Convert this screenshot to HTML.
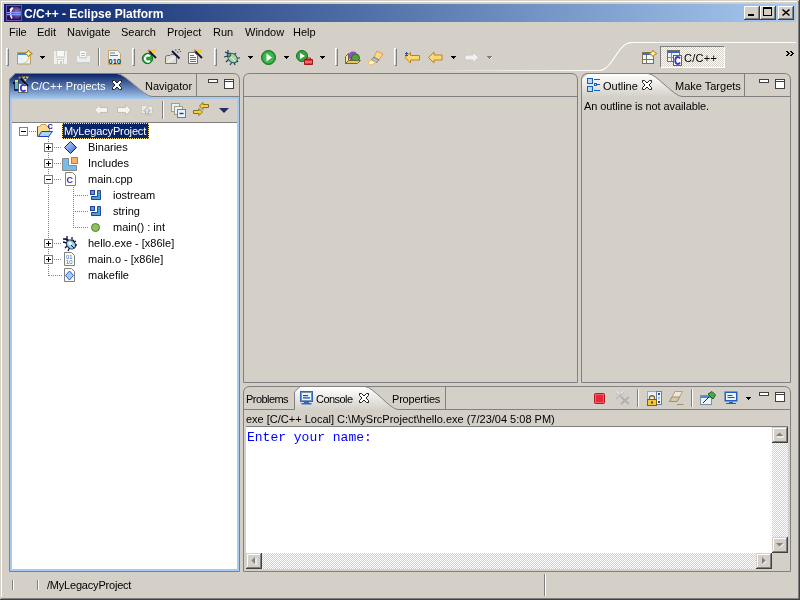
<!DOCTYPE html>
<html><head><meta charset="utf-8">
<style>
*{margin:0;padding:0;box-sizing:border-box}
html,body{width:800px;height:600px;overflow:hidden;background:#d4d0c8;font:11px "Liberation Sans",sans-serif;color:#000}
.a{position:absolute}
.t{position:absolute;white-space:nowrap;line-height:13px;font-size:11px;will-change:transform}
.h{position:absolute;background:#808080}
.w{position:absolute;background:#fff}
.dith{background:repeating-conic-gradient(#fff 0 25%,#d4d0c8 0 50%) 0 0/2px 2px}
svg{position:absolute;overflow:visible}
.btn{position:absolute;width:16px;height:14px;background:#d4d0c8;box-shadow:inset -1px -1px #404040,inset 1px 1px #fff,inset -2px -2px #808080,inset 2px 2px #d4d0c8}
.hdl{position:absolute;width:3px;height:18px;border-left:1px solid #fff;border-top:1px solid #fff;border-right:1px solid #808080;border-bottom:1px solid #808080}
.sep{position:absolute;width:2px;height:18px;border-left:1px solid #808080;border-right:1px solid #fff}
.mn{position:absolute;width:10px;height:4px;border:1px solid #404040;background:#fff}
.mx{position:absolute;width:10px;height:10px;border:1px solid #404040;background:#fff}
.mx::after{content:"";position:absolute;left:0;top:1px;width:8px;height:1px;background:#404040}
.tb{position:absolute;width:9px;height:9px;border:1px solid #808080;background:#fff}
.sb{position:absolute;width:16px;height:16px;background:#d4d0c8;box-shadow:inset -1px -1px #404040,inset 1px 1px #d4d0c8,inset -2px -2px #808080,inset 2px 2px #fff}
.dd{position:absolute;width:5px;height:3px;--c:#000;background:linear-gradient(var(--c),var(--c)) 0 0/5px 1px no-repeat,linear-gradient(var(--c),var(--c)) 1px 1px/3px 1px no-repeat,linear-gradient(var(--c),var(--c)) 2px 2px/1px 1px no-repeat}
</style></head><body>
<!-- window frame -->
<div class="w" style="left:1px;top:1px;width:796px;height:1px"></div>
<div class="w" style="left:1px;top:1px;width:1px;height:596px"></div>
<div class="h" style="left:1px;top:598px;width:798px;height:1px"></div>
<div class="h" style="left:798px;top:1px;width:1px;height:598px"></div>
<div class="a" style="left:0;top:599px;width:800px;height:1px;background:#404040"></div>
<div class="a" style="left:799px;top:0;width:1px;height:600px;background:#404040"></div>

<!-- title bar -->
<div class="a" style="left:4px;top:4px;width:792px;height:18px;background:linear-gradient(to right,#0a246a,#a6caf0)"></div>
<div class="t" style="left:24px;top:8px;color:#fff;font-weight:bold;font-size:12px">C/C++ - Eclipse Platform</div>


<!-- title icon -->
<svg style="left:6px;top:5px" width="16" height="16">
<defs><radialGradient id="eg" cx="0.62" cy="0.45" r="0.55"><stop offset="0" stop-color="#9078c8"/><stop offset="0.7" stop-color="#5a3c90"/><stop offset="1" stop-color="#2a1858"/></radialGradient></defs>
<rect x="0.5" y="0.5" width="15" height="15" fill="#22164e" stroke="#7050b0"/>
<circle cx="9.5" cy="8" r="6.5" fill="url(#eg)"/>
<path d="M7 2.5 Q2.5 7 6 13.5" stroke="#f0e0ff" stroke-width="1.6" fill="none"/>
<path d="M6.5 3 L4 5" stroke="#fff" stroke-width="2"/>
<rect x="1" y="7" width="14" height="1.2" fill="#8898f8"/><rect x="1" y="9" width="14" height="1.2" fill="#8898f8"/>
</svg>
<!-- title buttons -->
<div class="btn" style="left:744px;top:6px"><div class="a" style="left:4px;top:8px;width:6px;height:2px;background:#000"></div></div>
<div class="btn" style="left:760px;top:6px"><div class="a" style="left:3px;top:1px;width:9px;height:9px;border:1px solid #000;border-top-width:2px"></div></div>
<div class="btn" style="left:778px;top:6px"><svg style="left:0;top:0" width="16" height="14"><path d="M4.5 3.5 L11.5 9.5 M11.5 3.5 L4.5 9.5" stroke="#000" stroke-width="1.6"/></svg></div>

<!-- menu -->
<div class="t" style="left:9px;top:26px">File</div>
<div class="t" style="left:37px;top:26px">Edit</div>
<div class="t" style="left:67px;top:26px">Navigate</div>
<div class="t" style="left:121px;top:26px">Search</div>
<div class="t" style="left:167px;top:26px">Project</div>
<div class="t" style="left:213px;top:26px">Run</div>
<div class="t" style="left:245px;top:26px">Window</div>
<div class="t" style="left:293px;top:26px">Help</div>


<!-- toolbar -->
<div class="hdl" style="left:6px;top:48px"></div>
<svg style="left:17px;top:50px" width="16" height="15">
<rect x="0.5" y="2.5" width="13" height="11.5" fill="#e8f4fc" stroke="#b8a060"/>
<rect x="1" y="3" width="12" height="2" fill="#4a8ad0"/>
<path d="M12 5 Q12 12 6 13.5" stroke="#f0c040" fill="none"/>
<path d="M11.5 0.2 L12.8 2.2 L15.3 3.5 L12.8 4.8 L11.5 6.8 L10.2 4.8 L7.7 3.5 L10.2 2.2z" fill="#fff4a0" stroke="#a07820"/>
</svg>
<div class="dd" style="left:40px;top:56px"></div>
<svg style="left:53px;top:50px" width="15" height="15">
<rect x="0.5" y="0.5" width="14" height="14" fill="#f0f0ee" stroke="#cfcfcc"/>
<rect x="3.5" y="0.5" width="8" height="7" fill="#f8f8f6" stroke="#cfcfcc"/>
<rect x="3" y="6" width="9" height="1.5" fill="#e0ded8"/>
<rect x="4.5" y="9.5" width="6" height="5" fill="#f6f6f4" stroke="#cfcfcc"/>
<rect x="7" y="11" width="2" height="3" fill="#c8c8c4"/>
</svg>
<svg style="left:76px;top:50px" width="15" height="15">
<path d="M3.5 0.5 H8.5 L10.5 2.5 V7.5 H3.5z" fill="#f8f8f6" stroke="#cfcfcc"/>
<path d="M5 3.5 H9 M5 5.5 H9" stroke="#c0c0c0"/>
<path d="M0.5 5.5 H3.5 V8 H10.5 V5.5 H14.5 V12.5 H0.5z" fill="#eeeeec" stroke="#cfcfcc"/>
<rect x="1" y="12" width="13" height="2.5" fill="#c8ccd4"/>
</svg>
<div class="sep" style="left:98px;top:48px"></div>
<svg style="left:108px;top:50px" width="14" height="15">
<path d="M0.5 0.5 h9 l3 3 v11 h-12z" fill="#eef4fc" stroke="#c0a868"/>
<path d="M2 3 h5 M2 5.5 h8" stroke="#5080c0" stroke-width="1.2"/>
<text x="0.5" y="13.5" font-family="Liberation Sans" font-weight="bold" font-size="7.5" fill="#102a68">010</text>
</svg>
<div class="hdl" style="left:132px;top:48px"></div>
<svg style="left:142px;top:49px" width="16" height="16">
<circle cx="5.5" cy="9.5" r="5.2" fill="#28a038" stroke="#186828"/>
<path d="M8 7.3 A3 3 0 1 0 8 11.7" stroke="#fff" stroke-width="2" fill="none"/>
<path d="M6.5 1.5 L14 9" stroke="#101030" stroke-width="1.8"/><path d="M6 1 L7.5 2.5" stroke="#e08050" stroke-width="1.8"/><path d="M9 0.5 l1 1.5 l1 -1.5 M12 0.5 l1 1.5 l1 -1.5 M10.5 3 l1 1.5 l1 -1.5" stroke="#f0c820" stroke-width="1.1" fill="none"/>
</svg>
<svg style="left:165px;top:49px" width="17" height="16">
<path d="M0.5 14.5 V8.5 Q0.5 6.5 2.5 6.5 H5 L6 5.5 H9 L10 6.5 H11.5 V14.5z" fill="#dcdcdc" stroke="#707070"/>
<path d="M1 14 L9 7.5 M3 14 L10 8.5" stroke="#f8f8d0"/>
<path d="M7 2 L14.5 9.5" stroke="#101030" stroke-width="1.8"/>
<path d="M10 1 h1.5 M13.5 0.5 h1.5 M12 3 h1.5 M15 2.5 h1" stroke="#404880" stroke-width="1.2"/>
</svg>
<svg style="left:188px;top:49px" width="16" height="16">
<path d="M0.5 3.5 H6.5 L9.5 6.5 V14.5 H0.5z" fill="#fafafa" stroke="#707070"/>
<path d="M2 6.5 h4 M2 8.5 h6 M2 10.5 h6 M2 12.5 h6" stroke="#209090" stroke-width="1.1"/>
<path d="M6.5 1.5 L14 9" stroke="#101030" stroke-width="1.8"/><path d="M6 1 L7.5 2.5" stroke="#e08050" stroke-width="1.8"/><path d="M9 0.5 l1 1.5 l1 -1.5 M12 0.5 l1 1.5 l1 -1.5 M10.5 3 l1 1.5 l1 -1.5" stroke="#f0c820" stroke-width="1.1" fill="none"/>
</svg>
<div class="hdl" style="left:214px;top:48px"></div>
<svg style="left:224px;top:50px" width="17" height="16">
<path d="M1 2 L5 4 M4 0 V4 M0 7 L4 6 M2 12 L5 9 M6 15 L8 12 M12 3 L10 5 M16 8 L13 8 M14 12 L12 10 M11 15 L10 12" stroke="#1a3a50" stroke-width="1.2"/>
<ellipse cx="8.5" cy="8" rx="5.5" ry="4" fill="#a8d898" stroke="#2a5a70" transform="rotate(45 8.5 8)"/>
<path d="M6 6 L11 11" stroke="#e8f8e0" stroke-width="1"/>
<circle cx="5" cy="5" r="1.8" fill="#5a9a80" stroke="#1a3a50" stroke-width="0.8"/>
</svg>
<div class="dd" style="left:248px;top:56px"></div>
<svg style="left:261px;top:50px" width="15" height="15">
<circle cx="7.5" cy="7.5" r="7" fill="#28a038" stroke="#187020"/>
<circle cx="7.5" cy="7.5" r="5.5" fill="#40b850"/>
<path d="M5.5 3.5 L11 7.5 L5.5 11.5z" fill="#fff"/>
</svg>
<div class="dd" style="left:284px;top:56px"></div>
<svg style="left:296px;top:50px" width="17" height="15">
<circle cx="6" cy="6" r="5.5" fill="#30a840" stroke="#187020"/>
<path d="M4 3 L9 6 L4 9z" fill="#fff"/>
<path d="M8.5 9.5 h8 v5 h-8z" fill="#e03838" stroke="#a01818"/>
<path d="M10.5 9.5 v-1.5 h4 v1.5" stroke="#a01818" fill="none"/><path d="M9 12 h7" stroke="#ffa0a0"/>
</svg>
<div class="dd" style="left:320px;top:56px"></div>
<div class="hdl" style="left:335px;top:48px"></div>
<svg style="left:345px;top:51px" width="16" height="14">
<path d="M0.5 5.5 L3.5 2.5 L3.5 9.5 L0.5 12.5z" fill="#f8e890" stroke="#6a6a40"/>
<circle cx="8" cy="5" r="4.5" fill="#9050c0"/>
<circle cx="10.5" cy="7" r="4" fill="#50a040" stroke="#307020"/>
<path d="M0.5 12.5 L3.5 9.5 h12 l-3 3z" fill="#e8c850" stroke="#6a6a40"/>
</svg>
<svg style="left:368px;top:50px" width="16" height="15">
<path d="M9 1 L15 4 L11 10 L6 7z" fill="#f8d890" stroke="#e0a040"/>
<path d="M6 7 L11 10 L8 13 L3 10z" fill="#b8b8c0" stroke="#808088"/>
<path d="M3 10 L8 13 L2 15 L0 13z" fill="#fff8c0" stroke="#f0c060"/>
</svg>
<div class="hdl" style="left:394px;top:48px"></div>
<svg style="left:404px;top:51px" width="17" height="13">
<path d="M1 6.5 L6.5 1.5 V4.5 H15.5 V9 H6.5 V12 z" fill="#fcd870" stroke="#c08020"/>
<path d="M1 2 l3 3 M4 2 l-3 3 M2.5 1 v4" stroke="#2050b0"/>
</svg>
<svg style="left:428px;top:51px" width="15" height="13">
<path d="M0.5 6.5 L6 1 V4 H14 V9 H6 V12 z" fill="#fcd870" stroke="#c08020"/>
</svg>
<div class="dd" style="left:451px;top:56px"></div>
<svg style="left:464px;top:51px" width="15" height="13">
<path d="M14.5 6.5 L9 1 V4 H1 V9 H9 V12 z" fill="#f0f0f0" stroke="#c8c8c8"/>
</svg>
<div class="dd" style="left:487px;top:56px;--c:#808080"></div><div class="a" style="left:491px;top:57px;width:1px;height:1px;background:#fff"></div><div class="a" style="left:490px;top:58px;width:1px;height:1px;background:#fff"></div>

<!-- perspective bar -->
<svg style="left:0;top:0" width="800" height="80">
<defs><linearGradient id="pl" x1="400" y1="0" x2="600" y2="0" gradientUnits="userSpaceOnUse"><stop offset="0" stop-color="#fff" stop-opacity="0"/><stop offset="1" stop-color="#fff"/></linearGradient></defs>
<path d="M400 70.5 H599 C613 70.5 617 42.5 632 42.5" stroke="url(#pl)" fill="none"/>
<path d="M599 70.5 C613 70.5 617 42.5 632 42.5 H796" stroke="#fff" fill="none"/>
</svg>
<svg style="left:642px;top:50px" width="15" height="14">
<rect x="0.5" y="2.5" width="11" height="11" fill="#eef8fc" stroke="#807050"/>
<rect x="1" y="3" width="10" height="2" fill="#3a70c0"/>
<path d="M4.5 5 V13 M1 9.5 H11" stroke="#807050"/>
<path d="M11 0.2 L12.3 2.2 L14.8 3.5 L12.3 4.8 L11 6.8 L9.7 4.8 L7.2 3.5 L9.7 2.2z" fill="#fff4a0" stroke="#b08020"/>
</svg>
<div class="a dith" style="left:660px;top:46px;width:65px;height:22px;border-left:1px solid #808080;border-top:1px solid #808080;border-right:1px solid #fff;border-bottom:1px solid #fff"></div>
<svg style="left:667px;top:50px" width="16" height="16">
<rect x="0.5" y="0.5" width="12" height="11" fill="#f4f4ee" stroke="#707070"/>
<rect x="1" y="1" width="11" height="2" fill="#3a68c0"/>
<path d="M4.5 3 V11 M1 7.5 H12" stroke="#909080"/>
<rect x="6.5" y="5.5" width="8" height="10" fill="#fff" stroke="#606060"/>
<path d="M13 8.5 Q12.3 7 10.7 7 Q8.3 7 8.3 10.5 Q8.3 14 10.7 14 Q12.3 14 13 12.5" stroke="#3a3ac8" stroke-width="1.8" fill="none"/>
</svg>
<div class="t" style="left:684px;top:52px;letter-spacing:0.3px">C/C++</div>
<svg style="left:786px;top:51px" width="8" height="5" shape-rendering="crispEdges" fill="#000"><rect x="0" y="0" width="2" height="1"/><rect x="1" y="1" width="2" height="1"/><rect x="2" y="2" width="2" height="1"/><rect x="1" y="3" width="2" height="1"/><rect x="0" y="4" width="2" height="1"/><rect x="4" y="0" width="2" height="1"/><rect x="5" y="1" width="2" height="1"/><rect x="6" y="2" width="2" height="1"/><rect x="5" y="3" width="2" height="1"/><rect x="4" y="4" width="2" height="1"/></svg>

<!-- LEFT VIEW -->
<svg style="left:0;top:0" width="800" height="600">
<defs>
<linearGradient id="act" x1="0" y1="74" x2="0" y2="99" gradientUnits="userSpaceOnUse"><stop offset="0" stop-color="#0a246a"/><stop offset="1" stop-color="#a6caf0"/></linearGradient>
<linearGradient id="inact" x1="0" y1="74" x2="0" y2="97" gradientUnits="userSpaceOnUse"><stop offset="0" stop-color="#fff"/><stop offset="1" stop-color="#d4d0c8"/></linearGradient>
<linearGradient id="inact2" x1="0" y1="387" x2="0" y2="410" gradientUnits="userSpaceOnUse"><stop offset="0" stop-color="#fff"/><stop offset="1" stop-color="#d4d0c8"/></linearGradient>
</defs>
<!-- left view frame -->
<rect x="10" y="97" width="229" height="474" fill="#a6caf0"/>
<rect x="10" y="97" width="229" height="2" fill="#a6caf0"/>
<path d="M10 99 V79 L15 74 H117 C125 74 144 96.5 152 96.5 L153 99 H10z" fill="url(#act)"/>

<path d="M9.5 571.5 V79 L15 73.5 H233 Q239.5 73.5 239.5 80 V571.5 Z" fill="none" stroke="#808080"/>
<path d="M110 73.5 H117 C125 73.5 144 96.5 152 96.5 H239" fill="none" stroke="#808080"/>
<path d="M196.5 74 V96" stroke="#808080"/>
<!-- editor frame -->
<path d="M243.5 382.5 V80 Q243.5 73.5 250 73.5 H571 Q577.5 73.5 577.5 80 V382.5 Z" fill="none" stroke="#808080"/>
<path d="M244 96.5 H577" stroke="#808080"/>
<!-- outline frame -->
<path d="M582 97 V79 L588 74 H648 C656 74 674 96.5 682 96.5 H582z" fill="url(#inact)"/>
<path d="M581.5 382.5 V80 Q581.5 73.5 588 73.5 H784 Q790.5 73.5 790.5 80 V382.5 Z" fill="none" stroke="#808080"/>
<path d="M648 73.5 C656 73.5 674 96.5 682 96.5 H790" fill="none" stroke="#808080"/>
<path d="M744.5 74 V96" stroke="#808080"/>
<!-- console frame -->
<path d="M294 410 V392 L299.5 387 H365 C373 387 390 409.5 398 409.5 H294z" fill="url(#inact2)"/>
<path d="M243.5 571.5 V393 Q243.5 386.5 250 386.5 H784 Q790.5 386.5 790.5 393 V571.5 Z" fill="none" stroke="#808080"/>
<path d="M244 409.5 H294.5 V392 L300 386.5 H365 C373 386.5 390 409.5 398 409.5 H790" fill="none" stroke="#808080"/>
<path d="M445.5 387 V409" stroke="#808080"/>
</svg>
<div class="a" style="left:12px;top:99px;width:225px;height:23px;background:#d4d0c8"></div>
<div class="h" style="left:12px;top:122px;width:225px;height:1px"></div>
<div class="w" style="left:12px;top:123px;width:225px;height:446px"></div>
<div class="t" style="left:31px;top:80px;color:#fff">C/C++ Projects</div>
<div class="t" style="left:145px;top:80px">Navigator</div>
<div class="t" style="left:584px;top:100px;letter-spacing:-0.1px">An outline is not available.</div>
<div class="t" style="left:603px;top:80px">Outline</div>
<div class="t" style="left:675px;top:80px">Make Targets</div>
<div class="t" style="left:246px;top:393px;letter-spacing:-0.55px">Problems</div>
<div class="t" style="left:316px;top:393px;letter-spacing:-0.55px">Console</div>
<div class="t" style="left:392px;top:393px;letter-spacing:-0.2px">Properties</div>
<div class="t" style="left:246px;top:413px">exe [C/C++ Local] C:\MySrcProject\hello.exe (7/23/04 5:08 PM)</div>
<div class="h" style="left:246px;top:426px;width:542px;height:1px"></div><div class="w" style="left:246px;top:427px;width:542px;height:142px"></div>
<div class="t" style="left:247px;top:431px;font-family:'Liberation Mono';font-size:13px;color:#0000ff">Enter your name:</div>
<!-- tree -->
<svg style="left:0;top:0" width="300" height="300" fill="#808080"><rect x="29" y="131" width="1" height="1"/><rect x="31" y="131" width="1" height="1"/><rect x="33" y="131" width="1" height="1"/><rect x="35" y="131" width="1" height="1"/><rect x="48" y="137" width="1" height="1"/><rect x="48" y="139" width="1" height="1"/><rect x="48" y="141" width="1" height="1"/><rect x="48" y="143" width="1" height="1"/><rect x="48" y="145" width="1" height="1"/><rect x="48" y="147" width="1" height="1"/><rect x="48" y="149" width="1" height="1"/><rect x="48" y="151" width="1" height="1"/><rect x="48" y="153" width="1" height="1"/><rect x="48" y="155" width="1" height="1"/><rect x="48" y="157" width="1" height="1"/><rect x="48" y="159" width="1" height="1"/><rect x="48" y="161" width="1" height="1"/><rect x="48" y="163" width="1" height="1"/><rect x="48" y="165" width="1" height="1"/><rect x="48" y="167" width="1" height="1"/><rect x="48" y="169" width="1" height="1"/><rect x="48" y="171" width="1" height="1"/><rect x="48" y="173" width="1" height="1"/><rect x="48" y="175" width="1" height="1"/><rect x="48" y="177" width="1" height="1"/><rect x="48" y="179" width="1" height="1"/><rect x="48" y="181" width="1" height="1"/><rect x="48" y="183" width="1" height="1"/><rect x="48" y="185" width="1" height="1"/><rect x="48" y="187" width="1" height="1"/><rect x="48" y="189" width="1" height="1"/><rect x="48" y="191" width="1" height="1"/><rect x="48" y="193" width="1" height="1"/><rect x="48" y="195" width="1" height="1"/><rect x="48" y="197" width="1" height="1"/><rect x="48" y="199" width="1" height="1"/><rect x="48" y="201" width="1" height="1"/><rect x="48" y="203" width="1" height="1"/><rect x="48" y="205" width="1" height="1"/><rect x="48" y="207" width="1" height="1"/><rect x="48" y="209" width="1" height="1"/><rect x="48" y="211" width="1" height="1"/><rect x="48" y="213" width="1" height="1"/><rect x="48" y="215" width="1" height="1"/><rect x="48" y="217" width="1" height="1"/><rect x="48" y="219" width="1" height="1"/><rect x="48" y="221" width="1" height="1"/><rect x="48" y="223" width="1" height="1"/><rect x="48" y="225" width="1" height="1"/><rect x="48" y="227" width="1" height="1"/><rect x="48" y="229" width="1" height="1"/><rect x="48" y="231" width="1" height="1"/><rect x="48" y="233" width="1" height="1"/><rect x="48" y="235" width="1" height="1"/><rect x="48" y="237" width="1" height="1"/><rect x="48" y="239" width="1" height="1"/><rect x="48" y="241" width="1" height="1"/><rect x="48" y="243" width="1" height="1"/><rect x="48" y="245" width="1" height="1"/><rect x="48" y="247" width="1" height="1"/><rect x="48" y="249" width="1" height="1"/><rect x="48" y="251" width="1" height="1"/><rect x="48" y="253" width="1" height="1"/><rect x="48" y="255" width="1" height="1"/><rect x="48" y="257" width="1" height="1"/><rect x="48" y="259" width="1" height="1"/><rect x="48" y="261" width="1" height="1"/><rect x="48" y="263" width="1" height="1"/><rect x="48" y="265" width="1" height="1"/><rect x="48" y="267" width="1" height="1"/><rect x="48" y="269" width="1" height="1"/><rect x="48" y="271" width="1" height="1"/><rect x="48" y="273" width="1" height="1"/><rect x="48" y="275" width="1" height="1"/><rect x="54" y="147" width="1" height="1"/><rect x="56" y="147" width="1" height="1"/><rect x="58" y="147" width="1" height="1"/><rect x="60" y="147" width="1" height="1"/><rect x="54" y="163" width="1" height="1"/><rect x="56" y="163" width="1" height="1"/><rect x="58" y="163" width="1" height="1"/><rect x="60" y="163" width="1" height="1"/><rect x="54" y="179" width="1" height="1"/><rect x="56" y="179" width="1" height="1"/><rect x="58" y="179" width="1" height="1"/><rect x="60" y="179" width="1" height="1"/><rect x="54" y="243" width="1" height="1"/><rect x="56" y="243" width="1" height="1"/><rect x="58" y="243" width="1" height="1"/><rect x="60" y="243" width="1" height="1"/><rect x="54" y="259" width="1" height="1"/><rect x="56" y="259" width="1" height="1"/><rect x="58" y="259" width="1" height="1"/><rect x="60" y="259" width="1" height="1"/><rect x="49" y="275" width="1" height="1"/><rect x="51" y="275" width="1" height="1"/><rect x="53" y="275" width="1" height="1"/><rect x="55" y="275" width="1" height="1"/><rect x="57" y="275" width="1" height="1"/><rect x="59" y="275" width="1" height="1"/><rect x="61" y="275" width="1" height="1"/><rect x="73" y="187" width="1" height="1"/><rect x="73" y="189" width="1" height="1"/><rect x="73" y="191" width="1" height="1"/><rect x="73" y="193" width="1" height="1"/><rect x="73" y="195" width="1" height="1"/><rect x="73" y="197" width="1" height="1"/><rect x="73" y="199" width="1" height="1"/><rect x="73" y="201" width="1" height="1"/><rect x="73" y="203" width="1" height="1"/><rect x="73" y="205" width="1" height="1"/><rect x="73" y="207" width="1" height="1"/><rect x="73" y="209" width="1" height="1"/><rect x="73" y="211" width="1" height="1"/><rect x="73" y="213" width="1" height="1"/><rect x="73" y="215" width="1" height="1"/><rect x="73" y="217" width="1" height="1"/><rect x="73" y="219" width="1" height="1"/><rect x="73" y="221" width="1" height="1"/><rect x="73" y="223" width="1" height="1"/><rect x="73" y="225" width="1" height="1"/><rect x="73" y="227" width="1" height="1"/><rect x="75" y="195" width="1" height="1"/><rect x="77" y="195" width="1" height="1"/><rect x="79" y="195" width="1" height="1"/><rect x="81" y="195" width="1" height="1"/><rect x="83" y="195" width="1" height="1"/><rect x="85" y="195" width="1" height="1"/><rect x="87" y="195" width="1" height="1"/><rect x="75" y="211" width="1" height="1"/><rect x="77" y="211" width="1" height="1"/><rect x="79" y="211" width="1" height="1"/><rect x="81" y="211" width="1" height="1"/><rect x="83" y="211" width="1" height="1"/><rect x="85" y="211" width="1" height="1"/><rect x="87" y="211" width="1" height="1"/><rect x="75" y="227" width="1" height="1"/><rect x="77" y="227" width="1" height="1"/><rect x="79" y="227" width="1" height="1"/><rect x="81" y="227" width="1" height="1"/><rect x="83" y="227" width="1" height="1"/><rect x="85" y="227" width="1" height="1"/><rect x="87" y="227" width="1" height="1"/></svg>
<div class="tb" style="left:19px;top:127px"><div class="a" style="left:1px;top:3px;width:5px;height:1px;background:#000"></div></div>
<div class="tb" style="left:44px;top:143px"><div class="a" style="left:1px;top:3px;width:5px;height:1px;background:#000"></div><div class="a" style="left:3px;top:1px;width:1px;height:5px;background:#000"></div></div>
<div class="tb" style="left:44px;top:159px"><div class="a" style="left:1px;top:3px;width:5px;height:1px;background:#000"></div><div class="a" style="left:3px;top:1px;width:1px;height:5px;background:#000"></div></div>
<div class="tb" style="left:44px;top:175px"><div class="a" style="left:1px;top:3px;width:5px;height:1px;background:#000"></div></div>
<div class="tb" style="left:44px;top:239px"><div class="a" style="left:1px;top:3px;width:5px;height:1px;background:#000"></div><div class="a" style="left:3px;top:1px;width:1px;height:5px;background:#000"></div></div>
<div class="tb" style="left:44px;top:255px"><div class="a" style="left:1px;top:3px;width:5px;height:1px;background:#000"></div><div class="a" style="left:3px;top:1px;width:1px;height:5px;background:#000"></div></div>
<div class="a" style="left:62px;top:123px;width:87px;height:16px;background:#0a246a;outline:1px dotted #f8e088;outline-offset:-1px"></div>
<div class="t" style="left:64px;top:125px;color:#fff;letter-spacing:-0.15px">MyLegacyProject</div>
<div class="t" style="left:88px;top:141px">Binaries</div>
<div class="t" style="left:88px;top:157px">Includes</div>
<div class="t" style="left:88px;top:173px">main.cpp</div>
<div class="t" style="left:113px;top:189px">iostream</div>
<div class="t" style="left:113px;top:205px">string</div>
<div class="t" style="left:113px;top:221px">main() : int</div>
<div class="t" style="left:88px;top:237px">hello.exe - [x86le]</div>
<div class="t" style="left:88px;top:253px">main.o - [x86le]</div>
<div class="t" style="left:88px;top:269px">makefile</div>
<svg style="left:36px;top:122px" width="18" height="16">
<path d="M1.5 4.5 H4 L5 2.5 H10 L11 4.5 H13.5 V14.5 H1.5z" fill="#f8dc90" stroke="#c8a060"/>
<path d="M1.5 4.5 V14.5" stroke="#3050c0"/>
<path d="M5.5 9.5 H16.5 L12.5 14.5 H2.5z" fill="#a8d8f8" stroke="#2040c0"/>
<text x="11.5" y="6.5" font-family="Liberation Sans" font-weight="bold" font-size="7.5" fill="#2020b0">C</text>
</svg>
<svg style="left:64px;top:141px" width="14" height="14">
<defs><linearGradient id="dg" x1="0" y1="0" x2="1" y2="1"><stop offset="0" stop-color="#c8e0ff"/><stop offset="1" stop-color="#3060d0"/></linearGradient></defs>
<path d="M6.5 0.5 L12.5 6.5 L6.5 12.5 L0.5 6.5z" fill="url(#dg)" stroke="#102050"/>
</svg>
<svg style="left:62px;top:157px" width="16" height="14">
<path d="M0.5 1.5 H6.5 V8.5 H14.5 V13.5 H0.5z" fill="#78bcec" stroke="#888"/>
<rect x="9.5" y="0.5" width="6" height="6" fill="#fcb068" stroke="#888"/>
</svg>
<svg style="left:65px;top:172px" width="11" height="14">
<path d="M0.5 0.5 h7 l3 3 v10 h-10z" fill="#fcfcf0" stroke="#808080"/>
<text x="1.5" y="11" font-family="Liberation Sans" font-weight="bold" font-size="9" fill="#3030d0">C</text>
</svg>
<svg style="left:90px;top:190px" width="12" height="10">
<path d="M7.5 0.5 H10.5 V9.5 H1.5 V6.5 H7.5z" fill="#40a8d0" stroke="#2a40a0"/>
<rect x="0.5" y="0.5" width="4" height="4" fill="#40a8d0" stroke="#2a40a0"/>
</svg>
<svg style="left:90px;top:206px" width="12" height="10">
<path d="M7.5 0.5 H10.5 V9.5 H1.5 V6.5 H7.5z" fill="#40a8d0" stroke="#2a40a0"/>
<rect x="0.5" y="0.5" width="4" height="4" fill="#40a8d0" stroke="#2a40a0"/>
</svg>
<svg style="left:91px;top:223px" width="9" height="9"><circle cx="4.5" cy="4.5" r="4" fill="#90c060" stroke="#508030"/></svg>
<svg style="left:61px;top:235px" width="18" height="17">
<path d="M6 1 V6 M2 4 H6 L8 6 M2 7 L6 8 M4 13 L7 10 M7 16 L9 12 M11 2 V5 M13 5 L12 6 M15 6 L13 7 M16 10 L14 10" stroke="#101838" stroke-width="1.3"/>
<ellipse cx="10" cy="9.5" rx="5" ry="4" fill="#98d0f0" stroke="#101838" transform="rotate(40 10 9.5)"/>
<ellipse cx="9" cy="8.5" rx="2" ry="1.5" fill="#f0fff8" transform="rotate(40 9 8.5)"/>
<path d="M10 10 L13 13" stroke="#102030"/>
</svg>
<svg style="left:64px;top:252px" width="12" height="15">
<path d="M0.5 0.5 h7 l3 3 v10 h-10z" fill="#fcfcf0" stroke="#808080"/>
<text x="2" y="6.5" font-family="Liberation Sans" font-size="6" fill="#4070d0">01</text>
<text x="2" y="12" font-family="Liberation Sans" font-size="6" fill="#4070d0">10</text>
</svg>
<svg style="left:64px;top:268px" width="12" height="15">
<path d="M0.5 0.5 h7 l3 3 v10 h-10z" fill="#fcfcf0" stroke="#808080"/>
<path d="M5.5 3 L9.5 7.5 L5.5 12 L1.5 7.5z" fill="#a8c8f8" stroke="#3060c0"/>
</svg>
<!-- tab icons -->
<svg style="left:112px;top:80px" width="10" height="10"><path d="M0.5 0.5 H2.5 L5 3 L7.5 0.5 H9.5 V2.5 L7 5 L9.5 7.5 V9.5 H7.5 L5 7 L2.5 9.5 H0.5 V7.5 L3 5 L0.5 2.5z" fill="#fff" stroke="#202020"/></svg>
<svg style="left:642px;top:80px" width="10" height="10"><path d="M0.5 0.5 H2.5 L5 3 L7.5 0.5 H9.5 V2.5 L7 5 L9.5 7.5 V9.5 H7.5 L5 7 L2.5 9.5 H0.5 V7.5 L3 5 L0.5 2.5z" fill="#fff" stroke="#202020"/></svg>
<svg style="left:359px;top:393px" width="10" height="10"><path d="M0.5 0.5 H2.5 L5 3 L7.5 0.5 H9.5 V2.5 L7 5 L9.5 7.5 V9.5 H7.5 L5 7 L2.5 9.5 H0.5 V7.5 L3 5 L0.5 2.5z" fill="#fff" stroke="#202020"/></svg>
<svg style="left:12px;top:76px" width="18" height="18">
<rect x="2.5" y="5.5" width="4" height="9" fill="#58b8c8" stroke="#203048"/>
<rect x="3" y="13" width="3" height="2" fill="#102080"/>
<rect x="3" y="4" width="3" height="2" fill="#e8d860"/>
<rect x="1" y="6" width="1.5" height="2" fill="#000"/>
<rect x="6.5" y="7.5" width="9" height="9" fill="#fff" stroke="#606060"/>
<path d="M13.5 10 Q12.8 8.8 11.3 8.8 Q8.8 8.8 8.8 12 Q8.8 15.2 11.3 15.2 Q12.8 15.2 13.5 14" stroke="#3a3ac8" stroke-width="1.7" fill="none"/>
<path d="M7.5 1.5 L16 10" stroke="#000" stroke-width="1.6"/><path d="M7 1 L8.5 2.5" stroke="#e07040" stroke-width="1.8"/>
<path d="M10.5 0.5 l1.2 1.5 l1.2 -1.5 M14 0.5 l1.2 1.5 l1.2 -1.5 M12.3 3 l1 1.5 l1 -1.5" stroke="#f8d020" stroke-width="1.1" fill="none"/>
</svg>
<svg style="left:587px;top:78px" width="14" height="15">
<rect x="0.5" y="0.5" width="5" height="5" fill="#b8dcf8" stroke="#1060c0"/>
<rect x="0.5" y="8.5" width="5" height="5" fill="#b8dcf8" stroke="#1060c0"/>
<path d="M7 1.5 h6 M7 12.5 h6 M10 6.5 h3" stroke="#1060c0"/>
<rect x="7.5" y="5.5" width="2" height="2" fill="none" stroke="#1060c0"/>
</svg>
<svg style="left:300px;top:391px" width="14" height="14">
<rect x="0" y="0" width="13" height="11" fill="#2a68c0"/>
<rect x="1.5" y="1.5" width="10" height="8" fill="#e4f6fc" stroke="#8090a8"/>
<rect x="3" y="4" width="5" height="1.2" fill="#2a4090"/><rect x="3" y="6.3" width="7" height="1.2" fill="#2a4090"/>
<rect x="4" y="11" width="5" height="1" fill="#2a68c0"/><rect x="1.5" y="12" width="10" height="1.5" fill="#2a68c0"/>
</svg>
<!-- left view toolbar -->
<svg style="left:94px;top:104px" width="15" height="12"><path d="M0.5 6 L6 0.5 V3.5 H13.5 V8.5 H6 V11.5z" fill="#f4f4ee" stroke="#c0c0b8"/></svg>
<svg style="left:117px;top:104px" width="15" height="12"><path d="M14 6 L8.5 0.5 V3.5 H0.5 V8.5 H8.5 V11.5z" fill="#f4f4ee" stroke="#c0c0b8"/></svg>
<svg style="left:141px;top:103px" width="13" height="14">
<path d="M0.5 2.5 h4 l1 1 h6 v7 h-11z" fill="#ecece8" stroke="#c8c8c0"/>
<path d="M6 4.5 L9.5 8 H7.5 V11 H4.5 V8 H2.5z" fill="#e0e0e0" stroke="#b0b0b0"/>
<path d="M5 12.5 h6" stroke="#c8c8c0"/>
</svg>
<div class="sep" style="left:162px;top:101px;height:18px"></div>
<svg style="left:171px;top:103px" width="16" height="15">
<rect x="0.5" y="0.5" width="8" height="8" fill="#e8f4fc" stroke="#a0a080"/>
<rect x="3.5" y="3.5" width="8" height="8" fill="#e8f4fc" stroke="#a0a080"/>
<rect x="6.5" y="6.5" width="8" height="8" fill="#e8f4fc" stroke="#6080a0"/>
<path d="M8.5 10.5 h4" stroke="#1040a0" stroke-width="1.4"/>
</svg>
<svg style="left:193px;top:102px" width="16" height="15">
<path d="M6.5 4 L10 0.5 V2.5 H15.5 V5.5 H10 V7.5z" fill="#f8d040" stroke="#807020"/>
<path d="M9.5 10 L6 6.5 V8.5 H0.5 V11.5 H6 V13.5z" fill="#f8d040" stroke="#807020"/>
</svg>
<svg style="left:219px;top:108px" width="11" height="6"><path d="M0 0 H10 L5 5z" fill="#2a2a60"/></svg>
<!-- console toolbar -->
<svg style="left:594px;top:393px" width="11" height="11">
<rect x="0.5" y="0.5" width="10" height="10" rx="1" fill="#e82838" stroke="#b01828"/>
<rect x="1.5" y="1.5" width="8" height="8" fill="none" stroke="#f06070"/>
</svg>
<svg style="left:615px;top:390px" width="16" height="16" fill="none">
<path d="M1 2 L9 9 M9 2 L1 9" stroke="#c0c0c0" stroke-width="2"/><path d="M1.5 1.5 L4 4 M8 1.5 L6 3.5" stroke="#fff"/>
<path d="M6 7 L14 14 M14 7 L6 14" stroke="#b0b0b0" stroke-width="2"/>
</svg>
<div class="sep" style="left:637px;top:389px;height:18px"></div>
<svg style="left:647px;top:391px" width="15" height="15">
<rect x="0.5" y="0.5" width="14" height="13" fill="#e4f0fc" stroke="#a0a8b0"/>
<rect x="9.5" y="0.5" width="5" height="13" fill="#f4f8fc" stroke="#6080b0"/>
<rect x="11" y="2" width="2" height="2" fill="#2050a0"/><rect x="11" y="10" width="2" height="2" fill="#2050a0"/>
<rect x="11" y="5.5" width="2" height="3" fill="#b0c0d8"/>
<path d="M2.5 8 V6 Q5 3.5 7.5 6 V8" stroke="#806010" stroke-width="1.2" fill="none"/>
<rect x="0.5" y="8.5" width="9" height="6" fill="#f0c840" stroke="#806010"/>
<rect x="4" y="10.5" width="2" height="2" fill="#604000"/>
</svg>
<svg style="left:669px;top:391px" width="15" height="14">
<path d="M0.5 10.5 L6 0.5 H13.5 L8 10.5z" fill="#f0e8d8" stroke="#b0a080"/>
<path d="M0.5 10.5 L3 6 H10.5 L8 10.5z" fill="#d8c8a8" stroke="#a09070"/>
<path d="M8 13.5 H14.5" stroke="#a09070"/>
</svg>
<div class="sep" style="left:691px;top:389px;height:18px"></div>
<svg style="left:700px;top:391px" width="16" height="15">
<rect x="0.5" y="4.5" width="11" height="9" fill="#e8f4fc" stroke="#8090a0"/>
<rect x="1" y="5" width="10" height="2" fill="#4a8ad0"/>
<path d="M3 12 L9 6" stroke="#202060"/>
<path d="M8 3 L12 0.5 L15.5 4 L13 8 z" fill="#40b040" stroke="#206020"/>
</svg>
<svg style="left:724px;top:391px" width="14" height="14">
<rect x="0.5" y="0.5" width="13" height="10" fill="#2060c0"/>
<rect x="2" y="2" width="10" height="7" fill="#e8f4fc"/>
<path d="M3.5 4.5 h5 M3.5 6.5 h7" stroke="#2050a0"/>
<path d="M5 11.5 h4 M2 12.5 h10" stroke="#2060c0"/>
</svg>
<div class="dd" style="left:746px;top:397px"></div>
<!-- scrollbars -->
<div class="a dith" style="left:772px;top:443px;width:16px;height:94px"></div>
<div class="a dith" style="left:262px;top:553px;width:494px;height:16px"></div>
<div class="a" style="left:772px;top:553px;width:16px;height:16px;background:#d4d0c8"></div>
<div class="sb" style="left:772px;top:427px"><svg style="left:0;top:0" width="16" height="16"><path d="M4 9 L7.5 5.5 L11 9z" fill="#808080"/><path d="M5 10 h7" stroke="#fff"/></svg></div>
<div class="sb" style="left:772px;top:537px"><svg style="left:0;top:0" width="16" height="16"><path d="M4 6 H11 L7.5 9.5z" fill="#808080"/><path d="M8 10.5 L11.5 7" stroke="#fff"/></svg></div>
<div class="sb" style="left:246px;top:553px"><svg style="left:0;top:0" width="16" height="16"><path d="M9 4 L5.5 7.5 L9 11z" fill="#808080"/><path d="M10 5 V12" stroke="#fff"/></svg></div>
<div class="sb" style="left:756px;top:553px"><svg style="left:0;top:0" width="16" height="16"><path d="M6 4 V11 L9.5 7.5z" fill="#808080"/><path d="M7 11.5 L10.5 8" stroke="#fff"/></svg></div>
<!-- status bar -->
<div class="sep" style="left:12px;top:580px;height:10px"></div>
<div class="sep" style="left:37px;top:580px;height:10px"></div>
<div class="sep" style="left:544px;top:574px;height:22px"></div>
<!-- min/max buttons -->
<div class="mn" style="left:208px;top:79px"></div><div class="mx" style="left:224px;top:79px"></div>
<div class="mn" style="left:759px;top:79px"></div><div class="mx" style="left:775px;top:79px"></div>
<div class="mn" style="left:759px;top:392px"></div><div class="mx" style="left:775px;top:392px"></div>

<!-- status -->
<div class="t" style="left:47px;top:579px;letter-spacing:-0.2px">/MyLegacyProject</div>
</body></html>
